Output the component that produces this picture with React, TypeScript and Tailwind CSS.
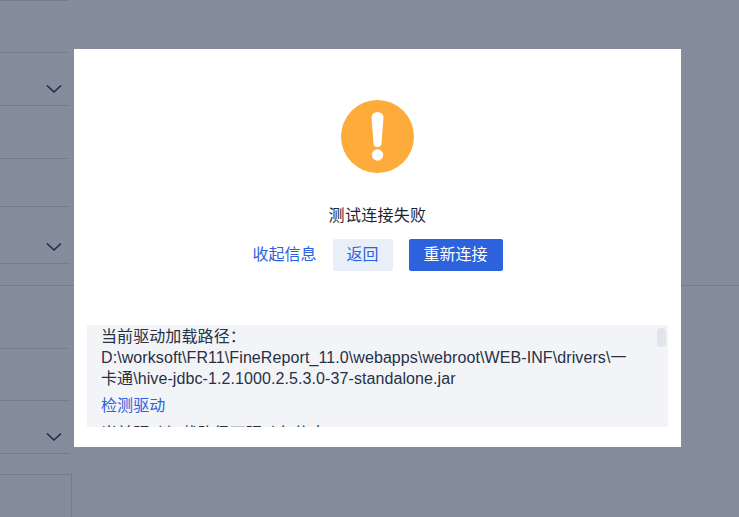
const rows = [
  { h: "h-[53px]", w: "w-[70px]", chevron: true },
  { h: "h-[53px]", w: "w-[68px]" },
  { h: "h-[48px]", w: "w-[70px]" },
  { h: "h-[57px]", w: "w-[70px]", chevron: true },
];
const rows2 = [
  { h: "h-[63px]", w: "w-[68px]" },
  { h: "h-[52px]", w: "w-[70px]" },
  { h: "h-[53px]", w: "w-[70px]", chevron: true },
];

function Row({ h, w, chevron }: { h: string; w: string; chevron?: boolean }) {
  return (
    <div className={`${h} ${w} relative border-b border-[#747c8e]`}>
      {chevron && (
        <svg className="absolute left-[46px] bottom-[11px]" width="16" height="10" viewBox="0 0 16 10" fill="none">
          <path d="M1 1.5 L8 8 L15 1.5" stroke="#1c2c4c" strokeWidth="1.6" />
        </svg>
      )}
    </div>
  );
}

export default function App() {
  return (
    <div className="relative h-[517px] w-[739px] overflow-hidden bg-[#858c9c] font-['Liberation_Sans','Noto_Sans_CJK_SC',sans-serif]">
      <div className="h-px w-[68px] bg-[#747c8e]" />
      <div className="h-[52px] w-[68px] border-b border-[#747c8e]" />
      {rows.map((r, i) => (
        <Row key={i} {...r} />
      ))}
      <div className="h-[22px] w-full border-b border-[#747c8e]" />
      {rows2.map((r, i) => (
        <Row key={i} {...r} />
      ))}
      <div className="mt-[20px] h-[60px] w-[72px] border-t border-r border-[#747c8e]" />

      <div className="absolute left-[74px] top-[49px] flex h-[398px] w-[607px] flex-col items-center bg-white">
        <div className="mt-[51px] flex h-[73px] w-[73px] items-center justify-center rounded-full bg-[#fdab3a]">
          <svg width="13" height="49" viewBox="0 0 13 49" fill="#ffffff">
            <path d="M0.5 5.5 a6 5.5 0 0 1 12 0 L10.5 31 a4 4 0 0 1 -8 0 Z" />
            <circle cx="6.5" cy="43" r="5.7" />
          </svg>
        </div>
        <div className="mt-[31px] text-[16px] leading-[24px] tracking-[0.3px] text-[#1c2434]">测试连接失败</div>
        <div className="mt-[11px] flex items-center gap-4 text-[16px]">
          <span className="text-[#2c62dc]">收起信息</span>
          <button className="h-8 w-[60px] rounded-[2px] bg-[#e9eff9] text-[#2c62dc]">返回</button>
          <button className="h-8 w-[94px] rounded-[2px] bg-[#2c62dc] text-white">重新连接</button>
        </div>
        <div className="relative mt-[54px] h-[102px] w-[581px] overflow-hidden bg-[#f2f4f8] pl-[14px] pr-[34px] pt-px text-[16px] leading-[21px] tracking-[0.09px] text-[#283044]">
          <div className="break-all">当前驱动加载路径：</div>
          <div className="break-all">D:\worksoft\FR11\FineReport_11.0\webapps\webroot\WEB-INF\drivers\一卡通\hive-jdbc-1.2.1000.2.5.3.0-37-standalone.jar</div>
          <div className="mt-[6px] text-[#2c62dc]">检测驱动</div>
          <div className="mt-[7px]">当前驱动加载路径下驱动包信息:</div>
          <div className="absolute right-[2px] top-[3px] h-[19px] w-[9px] rounded-[4px] bg-[#e1e4eb]" />
        </div>
      </div>
    </div>
  );
}
